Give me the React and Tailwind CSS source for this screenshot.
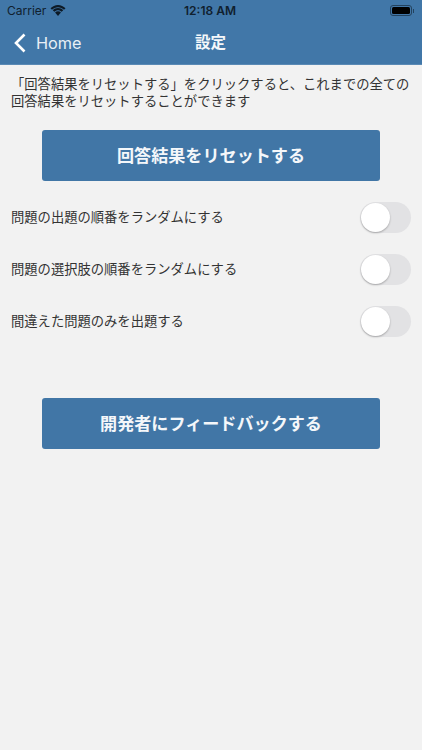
import React from 'react';

function Toggle() {
    return (
        <div className="w-[51px] h-[31px] rounded-full bg-[#e2e2e4] p-[1px] flex justify-start">
            <div className="w-[29px] h-[29px] rounded-full bg-white shadow-[0_1px_2px_rgba(0,0,0,0.28)]"></div>
        </div>
    );
}

function Row({ label }) {
    return (
        <div className="h-[52px] pt-[1px] pl-[11px] pr-[11px] flex items-center justify-between">
            <span className="text-[13.3px] text-[#333333]">{label}</span>
            <Toggle />
        </div>
    );
}

function BigButton({ children }) {
    return (
        <div className="mx-[42px] h-[51px] rounded-[3px] bg-[#4176a6] flex items-center justify-center text-[#f4f7fa] text-[17.100px] font-semibold">
            {children}
        </div>
    );
}

export default function App() {
    return (
        <div className="w-[422px] h-[750px] bg-[#f2f2f2] overflow-hidden font-['Inter','Noto_Sans_CJK_JP',sans-serif]">
            {/* HEADER */}
            <div className="h-[65px] bg-[#4177a8] border-b border-[#5a8ab5]">
                <div className="h-[21px] pl-[7px] pr-[8px] flex items-center justify-between relative text-[12px] text-[#10202e]">
                    <div className="flex items-center gap-[4px]">
                        <span>Carrier</span>
                        <svg width="16" height="12" viewBox="0 0 16 12" fill="#0d1a26">
                            <path d="M8 2.300c2.300 0 4.400.9 6 2.500l1.500-1.600C13.500 1.300 10.900 0 8 0S2.500 1.300.5 3.200L2 4.800c1.600-1.600 3.700-2.500 6-2.500z" />
                            <path d="M8 5.300c1.400 0 2.700.6 3.700 1.500l1.500-1.600C11.900 3.900 10 3.100 8 3.100s-3.900.8-5.200 2.100l1.500 1.600C5.300 5.900 6.600 5.300 8 5.300z" />
                            <path d="M8 6.200c-1.100 0-2.100.5-2.900 1.200L8 11l2.900-3.600C10.100 6.700 9.100 6.200 8 6.200z" />
                        </svg>
                    </div>
                    <span className="absolute left-[184px] font-semibold">12:18 AM</span>
                    <div className="flex items-center gap-[1px]">
                        <div className="w-[22px] h-[11px] rounded-[3px] border border-[#23425e] p-[1px]">
                            <div className="w-full h-full rounded-[1.5px] bg-black"></div>
                        </div>
                        <div className="w-[1px] h-[4px] bg-[#23425e]"></div>
                    </div>
                </div>
                <div className="h-[43px] pt-[1px] flex items-center relative text-white">
                    <svg className="ml-[13px]" width="13" height="20" viewBox="0 0 13 20" fill="none" stroke="#fff" strokeWidth="2.6">
                        <path d="M11.500 1.500 L3 10 L11.500 18.500" />
                    </svg>
                    <span className="ml-[10px] text-[16.300px] text-[#e9eff5]">Home</span>
                    <span className="absolute left-[195px] text-[15.500px] font-semibold text-[#f4f7fa]">設定</span>
                </div>
            </div>

            {/* DESCRIPTION */}
            <div className="pt-[11px] px-[11px] text-[13.3px] leading-[17px] text-[#333333]">
                <p className="whitespace-nowrap">「回答結果をリセットする」をクリックすると、これまでの全ての</p>
                <p className="whitespace-nowrap">回答結果をリセットすることができます</p>
            </div>

            <div className="mt-[20px]">
                <BigButton>回答結果をリセットする</BigButton>
            </div>

            {/* OPTIONS */}
            <div className="mt-[10px]">
                <Row label="問題の出題の順番をランダムにする" />
                <Row label="問題の選択肢の順番をランダムにする" />
                <Row label="間違えた問題のみを出題する" />
            </div>

            <div className="mt-[51px]">
                <BigButton>開発者にフィードバックする</BigButton>
            </div>
        </div>
    );
}
